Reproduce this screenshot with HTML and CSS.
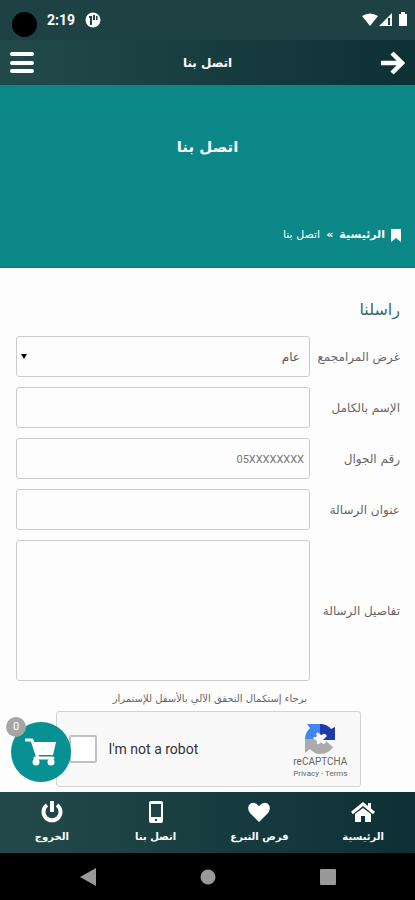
FILE: index.html
```html
<!DOCTYPE html>
<html lang="ar" dir="rtl">
<head>
<meta charset="utf-8">
<meta name="viewport" content="width=device-width, initial-scale=1">
<title>اتصل بنا</title>
<link rel="stylesheet" href="styles.css">
</head>
<body>
<div class="status" dir="ltr">
  <span class="camera"></span>
  <span class="clock">2:19</span>
  <svg class="notice" viewBox="0 0 16 16" width="16" height="16" aria-hidden="true"><circle cx="8" cy="8" r="7.500" fill="#fff"/><path d="M4 4h3v9H5V6H4zM8 3h2v5H8zM11 4h1.500v4H11z" fill="#1e4244"/></svg>
  <svg class="signals" viewBox="0 0 46 16" width="46" height="16" aria-hidden="true"><path d="M0 4Q8-1 16 4L8 14zM30 1v13H17z" fill="#fff"/><path d="M26 6h2v7h-2z" fill="#1e4244"/><path d="M39 0h4v2h2v12h-8V2h2z" fill="#fff"/></svg>
</div>
<header class="topbar">
  <button class="icon-button" type="button" aria-label="رجوع"><svg viewBox="0 0 24 24" width="24" height="24"><path d="M0 12h21M11 2l10 10-10 10" fill="none" stroke="#fff" stroke-width="4.500"/></svg></button>
  <strong class="topbar-title">اتصل بنا</strong>
  <button class="icon-button" type="button" aria-label="القائمة"><svg viewBox="0 0 24 24" width="24" height="24"><path d="M2 3h20M2 12h20M2 20h20" stroke="#fff" stroke-width="4" stroke-linecap="round"/></svg></button>
</header>
<section class="banner">
  <h1>اتصل بنا</h1>
  <nav class="crumbs">
    <svg viewBox="0 0 10 13" width="10" height="13" aria-hidden="true"><path d="M0 0h10v13L5 9l-5 4z" fill="#fff"/></svg>
    <a href="#home">الرئيسية</a><b>»</b><span>اتصل بنا</span>
  </nav>
</section>
<main class="content">
  <h2>راسلنا</h2>
  <form class="form">
    <label for="purpose">غرض المرامجمع</label>
    <div class="select-wrap"><select id="purpose"><option>عام</option></select></div>
    <label for="name">الإسم بالكامل</label>
    <input id="name" type="text">
    <label for="mobile">رقم الجوال</label>
    <input id="mobile" type="tel" placeholder="05XXXXXXXX">
    <label for="subject">عنوان الرسالة</label>
    <input id="subject" type="text">
    <label for="details">تفاصيل الرسالة</label>
    <textarea id="details"></textarea>
    <p class="hint">برجاء إستكمال التحقق الآلي بالأسفل للإستمرار</p>
  </form>
  <div class="captcha" dir="ltr">
    <input id="robot" type="checkbox">
    <label for="robot">I'm not a robot</label>
    <div class="captcha-brand">
      <svg viewBox="0 0 32 32" width="32" height="32" aria-hidden="true"><path d="M16 1q7 0 11 5l4-2v13H19l4-4q-2-3-4-2-2 2-3 0z" fill="#1c3aa9"/><path d="M16 1v10q-3-3-4 0 2 3-1 3-3 0-1 2H1Q1 10 6 5L3 1z" fill="#4285f4"/><path d="M1 16h9l3 2q-1 4 2 3 2-3 4 0 3 0 3-3l7 6q-4 7-13 7-6 0-10-5l-5 4z" fill="#ababab"/></svg>
      <span class="captcha-name">reCAPTCHA</span>
      <span class="captcha-links"><a href="#privacy">Privacy</a> - <a href="#terms">Terms</a></span>
    </div>
  </div>
</main>
<footer class="dock">
  <button class="cart" type="button" aria-label="السلة">
    <svg viewBox="0 0 32 28" width="32" height="28" aria-hidden="true"><path d="M1 2h6l6 18M10 20h18" fill="none" stroke="#fff" stroke-width="3" stroke-linejoin="round" stroke-linecap="round"/><path d="M7 4h24l-3 13H11z" fill="#fff"/><circle cx="11" cy="24" r="3.500" fill="#fff"/><circle cx="26" cy="24" r="3.500" fill="#fff"/></svg>
    <span class="badge">0</span>
  </button>
  <nav class="tabs">
    <a href="#home"><svg viewBox="0 0 24 22" width="24" height="22" aria-hidden="true"><path d="M1 12L12 3l11 9" fill="none" stroke="#fff" stroke-width="3"/><path d="M17 2h3v7l-3-3zM12 7l8 6v8h-6v-6h-4v6H4v-8z" fill="#fff"/></svg>الرئيسية</a>
    <a href="#giving"><svg viewBox="0 0 24 22" width="24" height="22" aria-hidden="true"><path d="M12 21L3 12Q0 8 2 4q4-5 10 1 6-6 10-1 2 4-1 8z" fill="#fff"/></svg>فرص التبرع</a>
    <a href="#contact"><svg viewBox="0 0 24 22" width="24" height="22" aria-hidden="true"><rect x="5" y="0" width="14" height="22" rx="2" fill="#fff"/><path d="M7 3h10v13H7z" fill="#1b4547"/><circle cx="12" cy="19" r="1.200" fill="#1b4547"/></svg>اتصل بنا</a>
    <a href="#logout"><svg viewBox="0 0 24 22" width="24" height="22" aria-hidden="true"><path d="M7 4a8.500 8.500 0 1 0 10 0M12 0v11" fill="none" stroke="#fff" stroke-width="4"/></svg>الخروج</a>
  </nav>
</footer>
<div class="system" dir="ltr">
  <svg viewBox="0 0 16 18" width="16" height="18" aria-hidden="true"><path d="M16 0v18L0 9z" fill="#999"/></svg>
  <svg viewBox="0 0 16 16" width="16" height="16" aria-hidden="true"><circle cx="8" cy="8" r="7.500" fill="#999"/></svg>
  <svg viewBox="0 0 16 16" width="16" height="16" aria-hidden="true"><rect width="16" height="16" rx="1" fill="#999"/></svg>
</div>
</body>
</html>
```
FILE: styles.css
```css
* { box-sizing: border-box; }
body {
  margin: 0;
  min-height: 100vh;
  display: flex;
  flex-direction: column;
  background: #fdfdfd;
  color: #666;
  font: 12px/16px "DejaVu Sans", sans-serif;
}
h1, h2, p { margin: 0; }
a { color: inherit; text-decoration: none; }
svg { display: block; flex: none; }
button { border: 0; padding: 0; background: none; color: inherit; font: inherit; }

.status {
  display: flex;
  align-items: center;
  height: 40px;
  padding: 0 7px 0 12px;
  background: #1e4244;
  color: #fff;
}
.camera { width: 25px; height: 25px; margin-top: 8px; border-radius: 50%; background: #000; }
.clock { margin-left: 10px; font: bold 14px/16px Roboto, sans-serif; }
.notice { margin-left: 10px; }
.signals { margin-left: auto; }

.topbar {
  display: flex;
  align-items: center;
  justify-content: space-between;
  height: 45px;
  padding: 0 10px;
  background: linear-gradient(to left, #0d3034, #234a4b);
  color: #fff;
}
.topbar-title { font-size: 12px; }

.banner {
  display: flex;
  flex-direction: column;
  justify-content: space-between;
  height: 183px;
  padding: 48px 14px 24px;
  background: #0b8788;
  border-bottom: 1px solid #08777a;
  color: #fff;
}
.banner h1 { font-size: 15px; line-height: 28px; text-align: center; }
.crumbs { display: flex; align-items: center; gap: 6px; font-size: 11px; }
.crumbs a { font-weight: bold; }

.content { flex: 1; padding: 30px 15px 5px 16px; }
.content h2 { margin-bottom: 14px; color: #3b696a; font-size: 16px; font-weight: normal; line-height: 24px; }
.form { display: grid; grid-template-columns: 90px 1fr; gap: 10px 0; align-items: center; }
.form > label { font-size: 12px; white-space: nowrap; }
.form input, .form select, .form textarea {
  display: block;
  width: 100%;
  height: 41px;
  margin: 0;
  border: 1px solid #ccc;
  border-radius: 3px;
  padding: 0 5px;
  background: #fdfdfd;
  color: #555;
  font: 12px/16px "DejaVu Sans", sans-serif;
  direction: rtl;
  text-align: right;
}
.form textarea { height: 141px; resize: none; }
.form select { appearance: none; padding: 0 9px; }
.form input::placeholder { color: #777; opacity: 1; font: 11px/16px Roboto, sans-serif; }
.select-wrap { position: relative; }
.select-wrap::after {
  content: "";
  position: absolute;
  left: 5px;
  top: 18px;
  border: 3px solid transparent;
  border-top: 5px solid #000;
  border-bottom: 0;
}
.hint { grid-column: 2; padding-right: 3px; font-size: 10px; white-space: nowrap; }

.captcha {
  display: flex;
  align-items: center;
  width: 305px;
  max-width: 100%;
  height: 76px;
  margin: 4px auto 0;
  padding: 0 12px;
  border: 1px solid #d3d3d3;
  border-radius: 3px;
  background: #f9f9f9;
  color: #333;
  font-family: Roboto, sans-serif;
}
.captcha input {
  appearance: none;
  width: 28px;
  height: 28px;
  margin: 0 12px 0 0;
  border: 2px solid #c1c1c1;
  border-radius: 2px;
  background: #fff;
}
.captcha label { font-size: 14px; }
.captcha-brand { display: flex; flex-direction: column; align-items: center; margin-left: auto; padding-top: 3px; color: #666; }
.captcha-name { font-size: 10px; line-height: 14px; }
.captcha-links { font-size: 8px; line-height: 10px; }

.dock { position: sticky; bottom: 47px; background: linear-gradient(to left, #0d3034, #234a4b); color: #fff; }
.tabs { display: grid; grid-template-columns: repeat(4, 1fr); height: 61px; padding-top: 9px; }
.tabs a { display: flex; flex-direction: column; align-items: center; gap: 6px; font-size: 10px; font-weight: bold; }
.cart {
  position: absolute;
  left: 11px;
  bottom: 71px;
  display: grid;
  place-items: center;
  width: 60px;
  height: 60px;
  border-radius: 50%;
  background: #079193;
}
.badge {
  position: absolute;
  left: -5px;
  top: -5px;
  width: 20px;
  height: 20px;
  border-radius: 50%;
  background: #a5a5a5;
  color: #fff;
  font: 11px/20px Roboto, sans-serif;
}
.system {
  position: sticky;
  bottom: 0;
  display: grid;
  grid-template-columns: repeat(3, 120px);
  justify-content: center;
  place-items: center;
  height: 47px;
  background: #000;
}
```
